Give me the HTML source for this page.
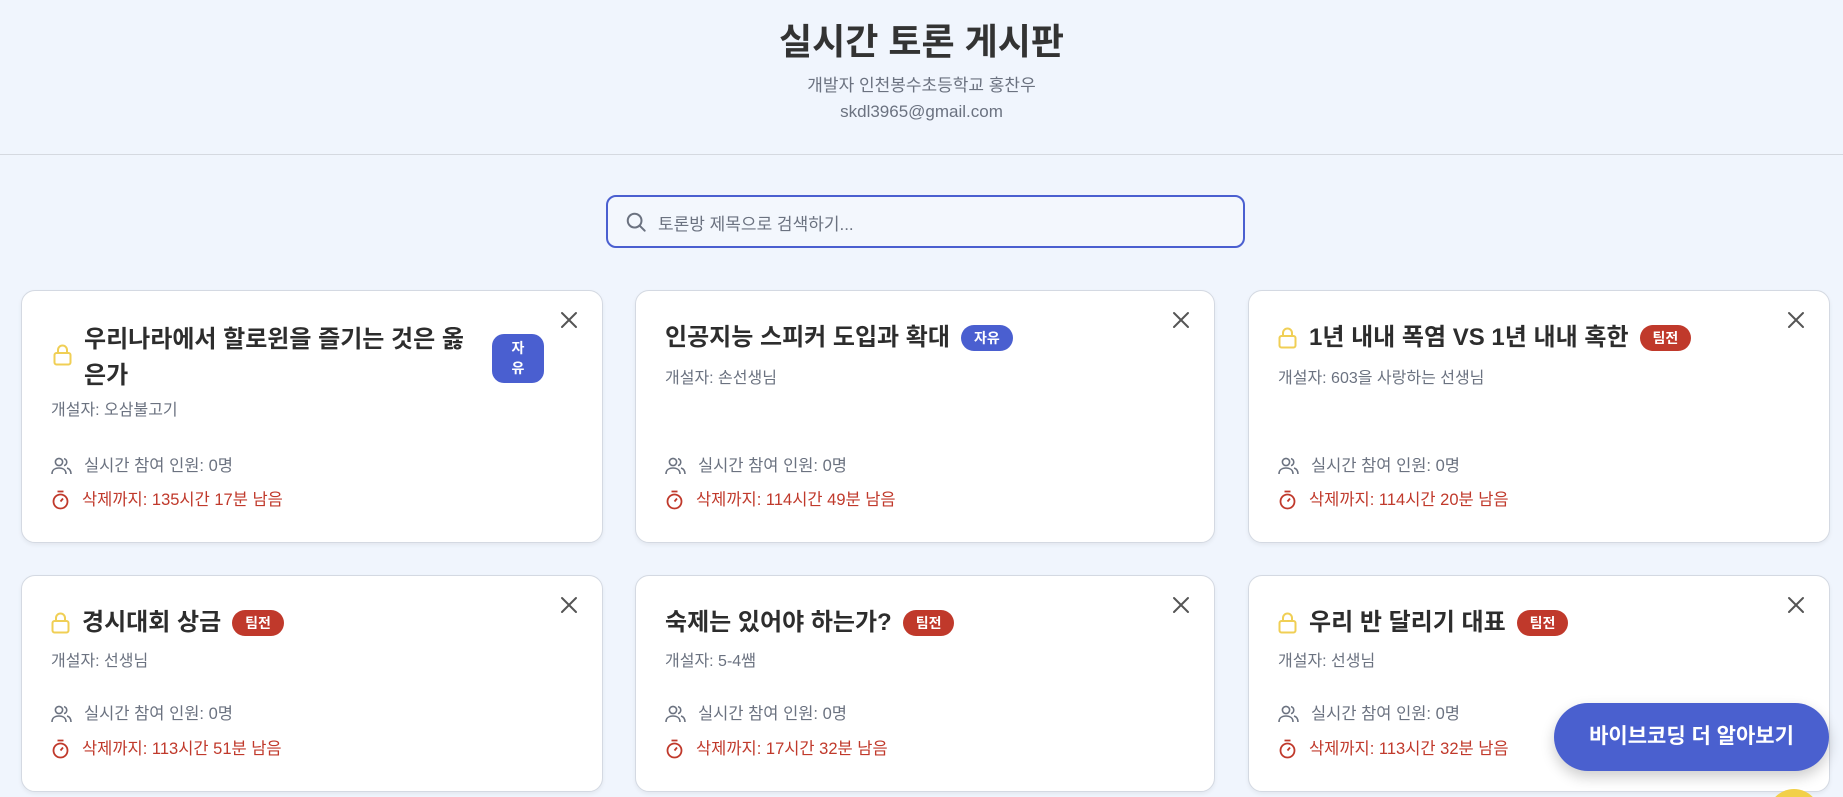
<!DOCTYPE html>
<html style="width:1843px;height:797px;overflow:hidden"><head><meta charset="utf-8">
<style>
*{box-sizing:border-box;margin:0;padding:0}
body{width:1843px;height:797px;overflow:hidden;background:#f0f5fd;font-family:"Liberation Sans","Noto Sans CJK KR",sans-serif;position:relative;color:#333}
.h1{position:absolute;left:0;width:1843px;top:19px;text-align:center;font-size:36px;font-weight:700;color:#333;line-height:46px}
.sub{position:absolute;left:0;width:1843px;text-align:center;font-size:17px;color:#6b7280;line-height:24px}
.hr{position:absolute;left:0;top:154px;width:1843px;height:1px;background:#d5d9e0}
.search{position:absolute;left:606px;top:195px;width:639px;height:53px;border:2px solid #4a5fd0;border-radius:10px;background:#f3f7fd}
.search svg{position:absolute;left:17px;top:14px}
.search span{position:absolute;left:50px;top:13px;font-size:17px;color:#6b7280}
.card{position:absolute;background:#fff;border:1px solid #d4d9e2;border-radius:14px;box-shadow:0 2px 4px rgba(0,0,0,.06)}
.x{position:absolute;right:24px;top:20px}
.t{position:absolute;left:29px;font-size:24px;font-weight:700;color:#2d2d2d;line-height:34px;white-space:nowrap;display:flex;align-items:center}
.t svg{margin-right:12px}
.b{display:inline-block;color:#fff;font-size:14px;font-weight:700;border-radius:14px;padding:0 13px;height:26px;line-height:26px;margin-left:11px}
.blue{background:#4a5fd0}.red{background:#c0392b}
.m{position:absolute;left:29px;font-size:16px;color:#6b7280;line-height:22px}
.s{position:absolute;left:29px;font-size:16.5px;line-height:22px;display:flex;align-items:center;white-space:nowrap}
.s svg{margin-right:12px}
.g{color:#6b7280}.r{color:#c0392b}
.fab{position:absolute;left:1554px;top:703px;width:275px;height:68px;border-radius:34px;background:#4a60cf;color:#fff;font-size:21px;font-weight:700;text-align:center;line-height:68px;box-shadow:0 6px 14px rgba(0,0,0,.2)}
.ycw{position:absolute;left:1768px;top:789px;width:52px;height:8px;overflow:hidden}
.yc{width:52px;height:52px;border-radius:50%;background:#f2d04a}
</style></head><body>
<div class="h1">실시간 토론 게시판</div>
<div class="sub" style="top:74px">개발자 인천봉수초등학교 홍찬우</div>
<div class="sub" style="top:100px">skdl3965@gmail.com</div>
<div class="hr"></div>
<div class="search"><svg width="22" height="22" viewBox="0 0 24 24" fill="none" stroke="#6b7280" stroke-width="2.2" stroke-linecap="round"><circle cx="10.5" cy="10.5" r="7.5"/><path d="M16 16l5.5 5.5"/></svg><span>토론방 제목으로 검색하기...</span></div>

<div class="card" style="left:21px;top:290px;width:582px;height:253px">
<svg class="x" width="18" height="18" viewBox="0 0 18 18" stroke="#555" stroke-width="2" stroke-linecap="round"><path d="M2 2l14 14M16 2L2 16"/></svg>
<svg style="position:absolute;left:31px;top:53px" width="19" height="22" viewBox="0 0 19 22" fill="none" stroke="#f0cf55" stroke-width="2"><rect x="1.5" y="9" width="16" height="11.5" rx="2"/><path d="M5 9V6a4.5 4.5 0 0 1 9 0v3"/></svg>
<div class="t" style="left:62px;top:31px;line-height:36px">우리나라에서 할로윈을 즐기는 것은 옳<br>은가</div>
<div style="position:absolute;left:470px;top:43px;width:52px;height:49px;border-radius:12px;background:#4a5fd0;color:#fff;font-size:14px;font-weight:700;text-align:center;line-height:20px;padding-top:4px">자<br>유</div>
<div class="m" style="top:109px">개설자: 오삼불고기</div>
<div class="s g" style="top:164px"><svg width="21" height="18" viewBox="0 0 21 18" fill="none" stroke="#6b7280" stroke-width="1.6"><circle cx="8" cy="5" r="3.6"/><path d="M1 17c0-4 3-6 7-6s7 2 7 6M13 1.6a3.6 3.6 0 0 1 0 7M16 11c2 .6 4 2.5 4 6"/></svg>실시간 참여 인원: 0명</div>
<div class="s r" style="top:198px"><svg width="19" height="20" viewBox="0 0 19 20" fill="none" stroke="#c0392b" stroke-width="1.8"><circle cx="9.5" cy="11.5" r="7"/><path d="M6.5 1.5h6M9.5 11.5l2.5-3"/></svg>삭제까지: 135시간 17분 남음</div>
</div>

<div class="card" style="left:635px;top:290px;width:580px;height:253px">
<svg class="x" width="18" height="18" viewBox="0 0 18 18" stroke="#555" stroke-width="2" stroke-linecap="round"><path d="M2 2l14 14M16 2L2 16"/></svg>
<div class="t" style="top:30px">인공지능 스피커 도입과 확대<span class="b blue">자유</span></div>
<div class="m" style="top:77px">개설자: 손선생님</div>
<div class="s g" style="top:164px"><svg width="21" height="18" viewBox="0 0 21 18" fill="none" stroke="#6b7280" stroke-width="1.6"><circle cx="8" cy="5" r="3.6"/><path d="M1 17c0-4 3-6 7-6s7 2 7 6M13 1.6a3.6 3.6 0 0 1 0 7M16 11c2 .6 4 2.5 4 6"/></svg>실시간 참여 인원: 0명</div>
<div class="s r" style="top:198px"><svg width="19" height="20" viewBox="0 0 19 20" fill="none" stroke="#c0392b" stroke-width="1.8"><circle cx="9.5" cy="11.5" r="7"/><path d="M6.5 1.5h6M9.5 11.5l2.5-3"/></svg>삭제까지: 114시간 49분 남음</div>
</div>

<div class="card" style="left:1248px;top:290px;width:582px;height:253px">
<svg class="x" width="18" height="18" viewBox="0 0 18 18" stroke="#555" stroke-width="2" stroke-linecap="round"><path d="M2 2l14 14M16 2L2 16"/></svg>
<div class="t" style="top:30px"><svg width="19" height="22" viewBox="0 0 19 22" fill="none" stroke="#f0cf55" stroke-width="2"><rect x="1.5" y="9" width="16" height="11.5" rx="2"/><path d="M5 9V6a4.5 4.5 0 0 1 9 0v3"/></svg>1년 내내 폭염 VS 1년 내내 혹한<span class="b red">팀전</span></div>
<div class="m" style="top:77px">개설자: 603을 사랑하는 선생님</div>
<div class="s g" style="top:164px"><svg width="21" height="18" viewBox="0 0 21 18" fill="none" stroke="#6b7280" stroke-width="1.6"><circle cx="8" cy="5" r="3.6"/><path d="M1 17c0-4 3-6 7-6s7 2 7 6M13 1.6a3.6 3.6 0 0 1 0 7M16 11c2 .6 4 2.5 4 6"/></svg>실시간 참여 인원: 0명</div>
<div class="s r" style="top:198px"><svg width="19" height="20" viewBox="0 0 19 20" fill="none" stroke="#c0392b" stroke-width="1.8"><circle cx="9.5" cy="11.5" r="7"/><path d="M6.5 1.5h6M9.5 11.5l2.5-3"/></svg>삭제까지: 114시간 20분 남음</div>
</div>

<div class="card" style="left:21px;top:575px;width:582px;height:217px">
<svg class="x" width="18" height="18" viewBox="0 0 18 18" stroke="#555" stroke-width="2" stroke-linecap="round"><path d="M2 2l14 14M16 2L2 16"/></svg>
<div class="t" style="top:30px"><svg width="19" height="22" viewBox="0 0 19 22" fill="none" stroke="#f0cf55" stroke-width="2"><rect x="1.5" y="9" width="16" height="11.5" rx="2"/><path d="M5 9V6a4.5 4.5 0 0 1 9 0v3"/></svg>경시대회 상금<span class="b red">팀전</span></div>
<div class="m" style="top:75px">개설자: 선생님</div>
<div class="s g" style="top:127px"><svg width="21" height="18" viewBox="0 0 21 18" fill="none" stroke="#6b7280" stroke-width="1.6"><circle cx="8" cy="5" r="3.6"/><path d="M1 17c0-4 3-6 7-6s7 2 7 6M13 1.6a3.6 3.6 0 0 1 0 7M16 11c2 .6 4 2.5 4 6"/></svg>실시간 참여 인원: 0명</div>
<div class="s r" style="top:162px"><svg width="19" height="20" viewBox="0 0 19 20" fill="none" stroke="#c0392b" stroke-width="1.8"><circle cx="9.5" cy="11.5" r="7"/><path d="M6.5 1.5h6M9.5 11.5l2.5-3"/></svg>삭제까지: 113시간 51분 남음</div>
</div>

<div class="card" style="left:635px;top:575px;width:580px;height:217px">
<svg class="x" width="18" height="18" viewBox="0 0 18 18" stroke="#555" stroke-width="2" stroke-linecap="round"><path d="M2 2l14 14M16 2L2 16"/></svg>
<div class="t" style="top:30px">숙제는 있어야 하는가?<span class="b red">팀전</span></div>
<div class="m" style="top:75px">개설자: 5-4쌤</div>
<div class="s g" style="top:127px"><svg width="21" height="18" viewBox="0 0 21 18" fill="none" stroke="#6b7280" stroke-width="1.6"><circle cx="8" cy="5" r="3.6"/><path d="M1 17c0-4 3-6 7-6s7 2 7 6M13 1.6a3.6 3.6 0 0 1 0 7M16 11c2 .6 4 2.5 4 6"/></svg>실시간 참여 인원: 0명</div>
<div class="s r" style="top:162px"><svg width="19" height="20" viewBox="0 0 19 20" fill="none" stroke="#c0392b" stroke-width="1.8"><circle cx="9.5" cy="11.5" r="7"/><path d="M6.5 1.5h6M9.5 11.5l2.5-3"/></svg>삭제까지: 17시간 32분 남음</div>
</div>

<div class="card" style="left:1248px;top:575px;width:582px;height:217px">
<svg class="x" width="18" height="18" viewBox="0 0 18 18" stroke="#555" stroke-width="2" stroke-linecap="round"><path d="M2 2l14 14M16 2L2 16"/></svg>
<div class="t" style="top:30px"><svg width="19" height="22" viewBox="0 0 19 22" fill="none" stroke="#f0cf55" stroke-width="2"><rect x="1.5" y="9" width="16" height="11.5" rx="2"/><path d="M5 9V6a4.5 4.5 0 0 1 9 0v3"/></svg>우리 반 달리기 대표<span class="b red">팀전</span></div>
<div class="m" style="top:75px">개설자: 선생님</div>
<div class="s g" style="top:127px"><svg width="21" height="18" viewBox="0 0 21 18" fill="none" stroke="#6b7280" stroke-width="1.6"><circle cx="8" cy="5" r="3.6"/><path d="M1 17c0-4 3-6 7-6s7 2 7 6M13 1.6a3.6 3.6 0 0 1 0 7M16 11c2 .6 4 2.5 4 6"/></svg>실시간 참여 인원: 0명</div>
<div class="s r" style="top:162px"><svg width="19" height="20" viewBox="0 0 19 20" fill="none" stroke="#c0392b" stroke-width="1.8"><circle cx="9.5" cy="11.5" r="7"/><path d="M6.5 1.5h6M9.5 11.5l2.5-3"/></svg>삭제까지: 113시간 32분 남음</div>
</div>

<div class="ycw"><div class="yc"></div></div>
<div class="fab">바이브코딩 더 알아보기</div>
</body></html>
